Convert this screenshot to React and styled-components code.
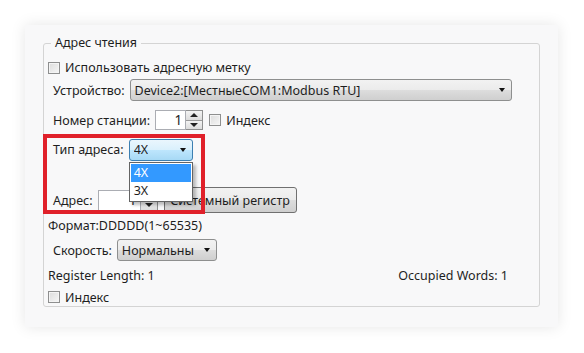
import React from 'react';
import styled, { createGlobalStyle } from 'styled-components';

const Global = createGlobalStyle`
  html, body { margin: 0; padding: 0; background: #ffffff; }
  body { font-family: "Noto Sans", "Liberation Sans", sans-serif; font-size: 12.5px; color: #1e1e1e; }
`;

const Page = styled.div`
  width: 584px;
  height: 353px;
  padding: 25px 0 0 25px;
  box-sizing: border-box;
`;

const Panel = styled.div`
  position: relative;
  width: 533px;
  height: 302px;
  padding: 10px 18px 0 18px;
  box-sizing: border-box;
  background: #f8f8f9;
  box-shadow: 0 0 14px rgba(0, 0, 0, 0.1);
`;

const Group = styled.fieldset`
  margin: 0;
  width: 497px;
  height: 272px;
  box-sizing: border-box;
  border: 1px solid #d4d4d4;
  border-radius: 3px;
  padding: 0 4px;
  display: flex;
  flex-direction: column;
`;

const Legend = styled.legend`
  margin-left: 3px;
  padding: 0 4px;
  line-height: 16px;
`;

const Row = styled.div`
  display: flex;
  align-items: center;
  height: ${p => p.$h}px;
  margin-top: ${p => p.$mt || 0}px;
  padding-left: ${p => (p.$indent ? 5 : 0)}px;
  justify-content: ${p => (p.$spread ? 'space-between' : 'flex-start')};
  padding-right: ${p => (p.$spread ? 27 : 0)}px;
`;

const Label = styled.span`
  white-space: nowrap;
  margin-right: ${p => p.$gap || 5}px;
`;

const Box = styled.span`
  width: 10px;
  height: 10px;
  border: 1px solid #8e8f8f;
  background: linear-gradient(135deg, #dcdcdc, #f6f6f6);
  box-shadow: inset 0 0 0 1px #f4f4f4;
  margin-right: 5px;
  flex: none;
`;

const Combo = styled.div`
  position: relative;
  display: flex;
  align-items: center;
  justify-content: space-between;
  box-sizing: border-box;
  width: ${p => p.$w}px;
  height: ${p => p.$h || 22}px;
  padding: 0 6px 0 4px;
  border: 1px solid ${p => (p.$hot ? '#3c7fb1' : '#8e8f8f')};
  border-radius: 3px;
  background: ${p =>
    p.$hot
      ? 'linear-gradient(#eaf6fd 0%, #d9f0fc 50%, #bee6fd 50%, #a7d9f5 100%)'
      : 'linear-gradient(#f2f2f2 0%, #ebebeb 50%, #dddddd 50%, #cfcfcf 100%)'};
  white-space: nowrap;
`;

const ComboText = styled.span`
  overflow: hidden;
  ${p => (p.$clip ? `width: ${p.$clip}px; flex: none;` : '')}
`;

const Arrow = styled.span`
  flex: none;
  margin-left: 4px;
  width: 0;
  height: 0;
  border-left: 3.5px solid transparent;
  border-right: 3.5px solid transparent;
  border-top: 4px solid #111;
`;

const Spin = styled.div`
  display: flex;
  height: ${p => p.$h || 20}px;
  box-sizing: border-box;
  margin-right: 6px;
`;

const SpinInput = styled.div`
  width: ${p => p.$w}px;
  box-sizing: border-box;
  border: 1px solid #abadb3;
  background: #fff;
  text-align: right;
  padding-right: 3px;
  line-height: 18px;
  font-size: 13.5px;
`;

const SpinButtons = styled.div`
  display: flex;
  flex-direction: column;
  width: 16px;
  border: 1px solid #8e8f8f;
  border-left: none;
`;

const SpinButton = styled.div`
  flex: 1;
  display: flex;
  align-items: center;
  justify-content: center;
  background: linear-gradient(#f3f3f3, #dcdcdc);
  border-top: ${p => (p.$down ? '1px solid #9a9a9a' : 'none')};
  &::after {
    content: '';
    border-left: 4px solid transparent;
    border-right: 4px solid transparent;
    ${p => (p.$down ? 'border-top: 4px solid #222;' : 'border-bottom: 4px solid #222;')}
  }
`;

const Button = styled.div`
  box-sizing: border-box;
  height: 26px;
  width: 133px;
  display: flex;
  align-items: center;
  justify-content: center;
  border: 1px solid #707070;
  border-radius: 3px;
  background: linear-gradient(#f2f2f2 0%, #ebebeb 50%, #dddddd 50%, #cfcfcf 100%);
  white-space: nowrap;
`;

const List = styled.div`
  position: absolute;
  left: -1px;
  top: 22px;
  width: 64px;
  box-sizing: border-box;
  border: 1px solid #646464;
  background: #fff;
  padding: 1px;
  box-shadow: 3px 3px 3px rgba(0, 0, 0, 0.25);
  z-index: 2;
`;

const Item = styled.div`
  height: 18px;
  line-height: 18px;
  padding-left: 3px;
  background: ${p => (p.$active ? '#3399ff' : 'transparent')};
  color: ${p => (p.$active ? '#fff' : '#1e1e1e')};
`;

const Mark = styled.div`
  position: absolute;
  left: 18px;
  top: 109px;
  width: 162px;
  height: 80px;
  box-sizing: border-box;
  border: 4px solid #e0202a;
  pointer-events: none;
  z-index: 1;
`;

export default function App() {
  return (
    <Page>
      <Global />
      <Panel>
        <Group>
          <Legend>Адрес чтения</Legend>
          <Row $h={22} $mt={6}>
            <Box />
            <span>Использовать адресную метку</span>
          </Row>
          <Row $h={24} $indent>
            <Label>Устройство:</Label>
            <Combo $w={382}>
              <ComboText>Device2:[МестныеCOM1:Modbus RTU]</ComboText>
              <Arrow />
            </Combo>
          </Row>
          <Row $h={28} $mt={4} $indent>
            <Label>Номер станции:</Label>
            <Spin>
              <SpinInput $w={31}>1</SpinInput>
              <SpinButtons>
                <SpinButton />
                <SpinButton $down />
              </SpinButtons>
            </Spin>
            <Box />
            <span>Индекс</span>
          </Row>
          <Row $h={28} $mt={2} $indent>
            <Label>Тип адреса:</Label>
            <Combo $w={64} $h={22} $hot>
              <ComboText>4X</ComboText>
              <Arrow />
              <List>
                <Item $active>4X</Item>
                <Item>3X</Item>
              </List>
            </Combo>
          </Row>
          <Row $h={26} $mt={24} $indent>
            <Label>Адрес:</Label>
            <Spin $h={21}>
              <SpinInput $w={43}>1</SpinInput>
              <SpinButtons>
                <SpinButton />
                <SpinButton $down />
              </SpinButtons>
            </Spin>
            <Button>Системный регистр</Button>
          </Row>
          <Row $h={24}>
            <span>Формат:DDDDD(1~65535)</span>
          </Row>
          <Row $h={25} $mt={1} $indent>
            <Label>Скорость:</Label>
            <Combo $w={100}>
              <ComboText $clip={72}>Нормальный</ComboText>
              <Arrow />
            </Combo>
          </Row>
          <Row $h={25} $mt={1} $spread>
            <span>Register Length: 1</span>
            <span>Occupied Words: 1</span>
          </Row>
          <Row $h={18}>
            <Box />
            <span>Индекс</span>
          </Row>
        </Group>
        <Mark />
      </Panel>
    </Page>
  );
}
